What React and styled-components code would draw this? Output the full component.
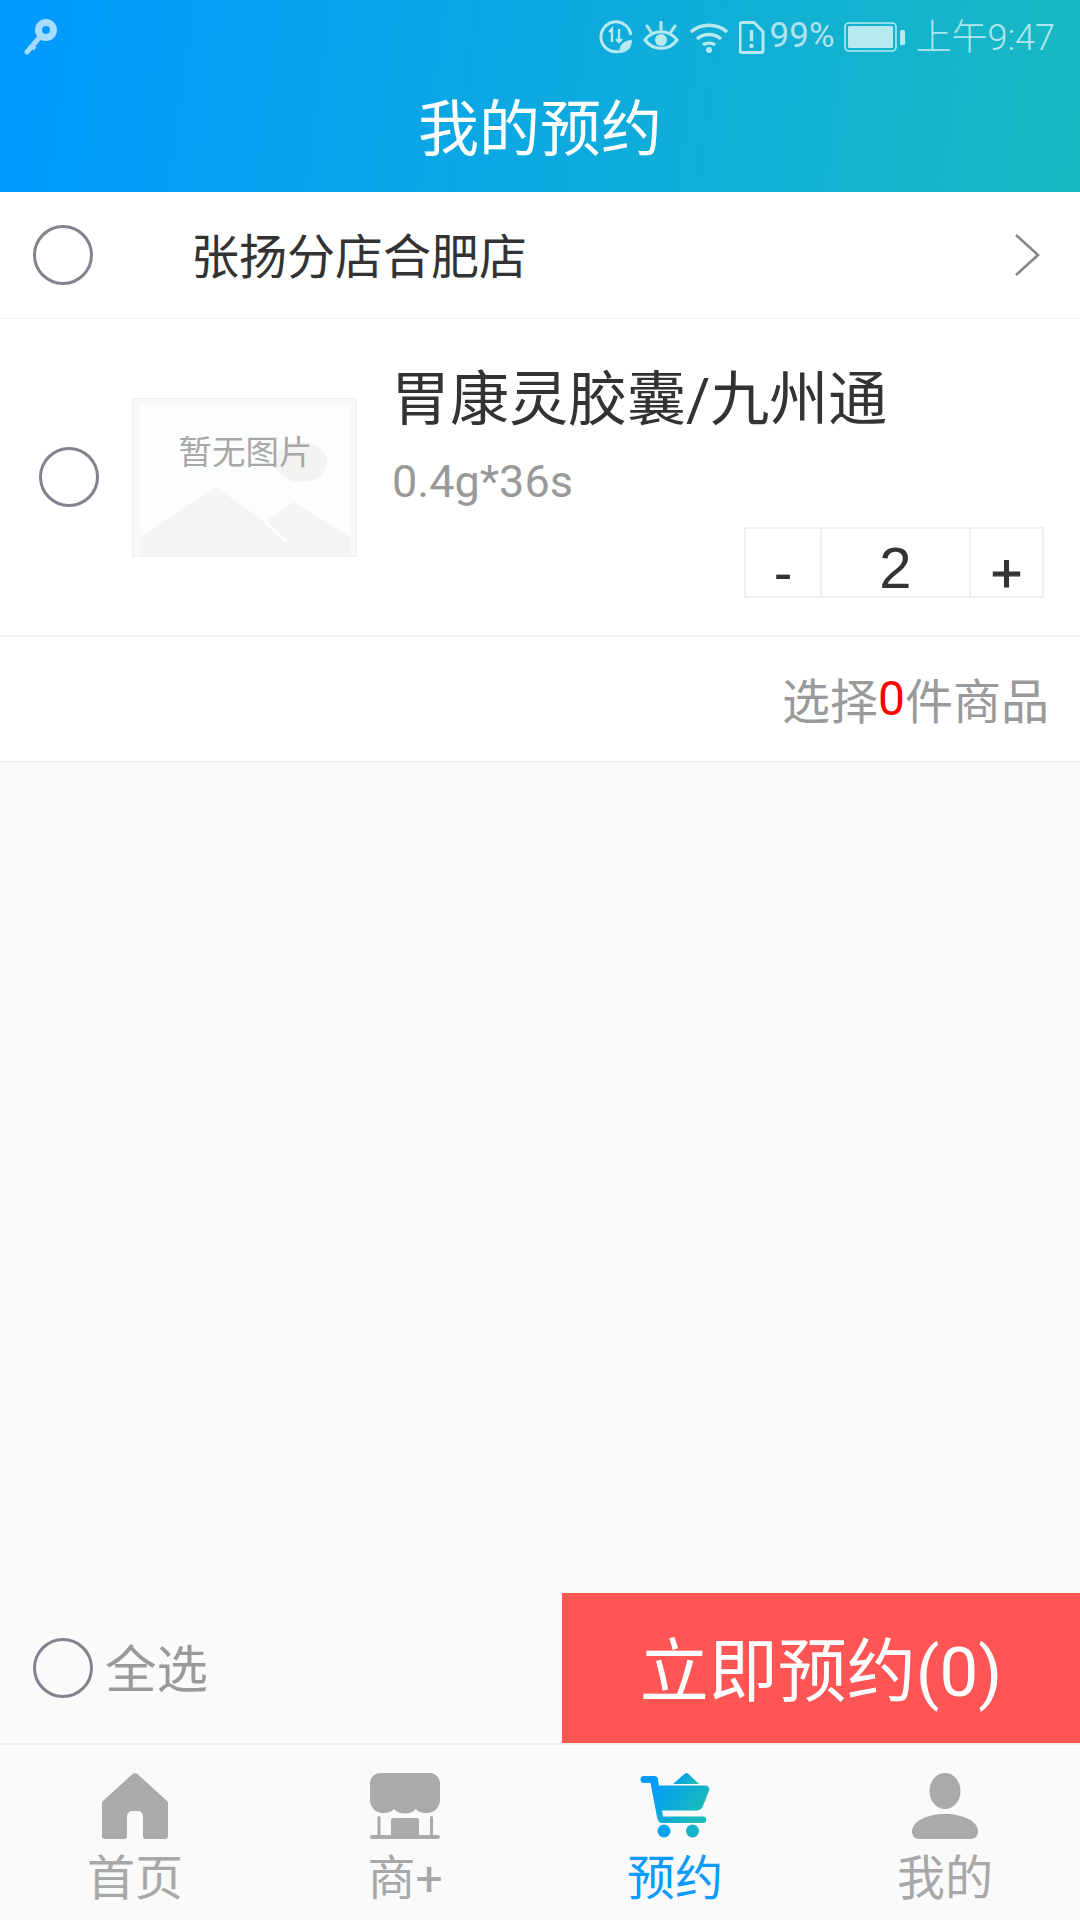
import React from "react";
import styled, { createGlobalStyle } from "styled-components";

const Global = createGlobalStyle`
  html, body { margin: 0; padding: 0; background: #fafafa; }
  * { box-sizing: border-box; }
  body { font-family: Roboto, "Noto Sans CJK SC", sans-serif; }
`;
const Page = styled.div`
  width: 1080px; height: 1920px; display: flex; flex-direction: column;
  background: #fafafa; overflow: hidden;
`;
const Header = styled.header`
  height: 192px; flex: none; display: flex; flex-direction: column;
  background: linear-gradient(98deg, #0099ff 0%, #19b9c2 100%);
`;
const StatusBar = styled.div`
  height: 70px; display: flex; align-items: center; padding: 4px 25px 0 24px;
  color: rgba(255,255,255,.68);
`;
const StatusLeft = styled.div`flex: 1; display: flex; align-items: center;`;
const StatusIcons = styled.div`display: flex; align-items: center; gap: 10px;`;
const Percent = styled.span`font-size: 35px; font-weight: 400; line-height: 36px; margin: -3px -1px 0 -5px;`;
const Clock = styled.span`font-size: 36px; font-weight: 300; line-height: 40px; margin: 1px 0 0 0;`;
const Title = styled.h1`
  margin: 0; flex: 1; display: flex; align-items: center; justify-content: center;
  color: #fff; font-size: 61px; font-weight: 400; line-height: 1; padding-bottom: 2px;
`;
const Radio = styled.span`
  flex: none; display: block; width: 60px; height: 60px; border-radius: 50%;
  border: 3px solid #84828f; background: transparent;
`;
const StoreRow = styled.div`
  height: 127px; flex: none; display: flex; align-items: center; background: #fff;
  border-bottom: 1px solid #eee; padding: 0 40px 0 33px;
`;
const StoreName = styled.div`flex: 1; margin: 6px 0 0 98px; font-size: 48px; color: #333; line-height: 1;`;
const ProductRow = styled.div`
  height: 318px; flex: none; display: flex; align-items: center; background: #fff;
  border-bottom: 2px solid #f0f0f0; padding-left: 39px;
`;
const Thumb = styled.div`
  position: relative; flex: none; width: 225px; height: 159px; margin-left: 33px;
  border: 1px solid #efefef; background: #f8f9f9;
`;
const ThumbText = styled.span`
  position: absolute; left: 2px; right: 0; top: 34px; text-align: center;
  font-size: 33.500px; line-height: 40px; color: #a8a8a8;
`;
const ProductInfo = styled.div`
  flex: 1; align-self: flex-start; display: flex; flex-direction: column; margin-left: 34px; padding: 46px 36px 0 0;
`;
const ProductName = styled.div`font-size: 59px; line-height: 70px; color: #333;`;
const ProductSpec = styled.div`font-size: 45px; line-height: 50px; margin: 22px 0 0 1px; color: #999;`;
const Stepper = styled.div`
  align-self: flex-end; display: grid; grid-template-columns: 74px 149px 73px; height: 71px; margin-top: 20px;
  border: 2px solid #f0f0f0;
`;
const StepCell = styled.div`
  display: flex; justify-content: center; align-items: center;
  color: #333; font-size: ${p => p.$size}px; line-height: 40px; font-family: "Liberation Sans", sans-serif;
  padding-top: ${p => p.$pt}px;
  & + & { border-left: 2px solid #f0f0f0; }
`;
const PlusGlyph = styled.span`-webkit-text-stroke: 1.2px #333;`;
const SummaryRow = styled.div`
  height: 126px; flex: none; display: flex; align-items: center; justify-content: flex-end;
  background: #fff; border-bottom: 2px solid #f0f0f0; padding: 0 31px 2px 0;
  font-size: 48px; color: #9a9a9a;
`;
const Count = styled.span`color: #ff0000;`;
const Spacer = styled.div`flex: 1;`;
const ActionBar = styled.div`height: 150px; flex: none; display: flex; align-items: center;`;
const SelectAll = styled.div`flex: 1; display: flex; align-items: center; padding-left: 33px; gap: 12px;`;
const SelectLabel = styled.span`font-size: 51.500px; line-height: 1; color: #9a9a9a; margin-top: 6px;`;
const ReserveButton = styled.button`
  width: 518px; height: 150px; border: 0; padding: 0 0 4px; background: #ff5555; color: #fff;
  font: 400 69px Roboto, "Noto Sans CJK SC", sans-serif;
`;
const TabBar = styled.nav`
  height: 177px; flex: none; display: grid; grid-template-columns: repeat(4, 270px);
  border-top: 2px solid #f0f0f0; background: #fafafa;
`;
const Tab = styled.div`
  display: flex; flex-direction: column; align-items: center; padding-top: 28px;
  color: ${p => (p.$active ? "#0a9bfd" : "#a8a8a8")};
`;
const TabLabel = styled.span`font-size: 48px; line-height: 50px; margin-top: 15px;`;

const Key = () => (
  <svg width="34" height="36" viewBox="0 0 34 36" fill="none">
    <circle cx="22" cy="11" r="7.5" stroke="#a8dcff" strokeWidth="7" />
    <path d="M15 19 L3 33" stroke="#a8dcff" strokeWidth="5" strokeLinecap="round" />
    <path d="M8 27l3 3" stroke="#a8dcff" strokeWidth="4" />
  </svg>
);
const DataIcon = () => (
  <svg width="34" height="34" viewBox="0 0 34 34" fill="none" stroke="#b6e9f0">
    <path d="M20 31.5A15 15 0 1 1 31.8 15" strokeWidth="3" />
    <path d="M10 12l3-3v13M20 9v13m-3-3l3 3 3-3" strokeWidth="2.4" />
    <path d="M20 33c0-8 5-13 13-13 0 8-5 13-13 13z" fill="#b6e9f0" stroke="none" />
  </svg>
);
const EyeIcon = () => (
  <svg width="36" height="32" viewBox="0 0 36 32" fill="none" stroke="#b6e9f0" strokeWidth="3">
    <path d="M2 19c8-11 24-11 32 0-8 11-24 11-32 0z" />
    <circle cx="18" cy="19" r="6" fill="#b6e9f0" stroke="none" />
    <path d="M18 1v7M4 5l4 6M32 5l-4 6" strokeLinecap="round" />
  </svg>
);
const WifiIcon = () => (
  <svg width="40" height="32" viewBox="0 0 40 32" fill="none" stroke="#b6e9f0" strokeWidth="3.4">
    <path d="M2 11c10-9 26-9 36 0M8 18c7-6 17-6 24 0M14 24c3-2.500 9-2.500 12 0" />
    <circle cx="20" cy="29" r="3" fill="#b6e9f0" stroke="none" />
  </svg>
);
const SimIcon = () => (
  <svg width="26" height="33" viewBox="0 0 26 33" fill="none" stroke="#b6e9f0" strokeWidth="3">
    <path d="M3 1.500h12l9 9v19a2 2 0 0 1-2 2H3a2 2 0 0 1-2-2v-26a2 2 0 0 1 2-2z" />
    <path d="M12.500 9v11" strokeWidth="3.400" />
    <circle cx="12.500" cy="25" r="2.200" fill="#b6e9f0" stroke="none" />
  </svg>
);
const Battery = () => (
  <svg width="62" height="30" viewBox="0 0 62 30" fill="none">
    <rect x="1" y="1" width="51" height="28" rx="4" stroke="#b6e9f0" strokeWidth="1.600" />
    <rect x="4" y="4" width="45" height="22" rx="1.500" fill="#b6e9f0" />
    <rect x="56" y="8" width="5" height="15" rx="1.500" fill="#b6e9f0" />
  </svg>
);
const Chevron = () => (
  <svg width="26" height="44" viewBox="0 0 26 44" fill="none">
    <path d="M2 2l22 20L2 42" stroke="#888" strokeWidth="2.600" />
  </svg>
);
const Mountains = () => (
  <svg width="223" height="157" viewBox="0 0 223 157" style={{ display: "block" }}>
    <rect width="223" height="157" fill="#f7f8f8" />
    <rect x="7" y="6" width="210" height="132" fill="#fcfdfd" />
    <ellipse cx="168" cy="63" rx="26" ry="20" fill="#f3f3f2" />
    <path d="M7 138L83 88l49 35 29-20 56 35v19H7z" fill="#f3f5f5" />
    <path d="M132 123l22 20" stroke="#fff" strokeWidth="2.500" />
  </svg>
);
const HomeIcon = () => (
  <svg width="66" height="66" viewBox="0 0 66 66" fill="#aaa">
    <path d="M30 1.500a4 4 0 0 1 6 0l29 26.500a3 3 0 0 1 1 2V63a3 3 0 0 1-3 3H44a3 3 0 0 1-3-3V43a5 5 0 0 0-5-5h-6a5 5 0 0 0-5 5v20a3 3 0 0 1-3 3H3a3 3 0 0 1-3-3V30a3 3 0 0 1 1-2z" />
  </svg>
);
const StoreIcon = () => (
  <svg width="70" height="66" viewBox="0 0 70 66" fill="#aaa">
    <path d="M10 0h50a10 10 0 0 1 10 10v17a13 13 0 0 1-13 13c-6 0-9-1.500-11-4-3 3-6 4.500-11 4.500S27 39 24 36c-2 2.500-5 4-11 4A13 13 0 0 1 0 27V10A10 10 0 0 1 10 0z" />
    <rect y="62" width="70" height="4" rx="2" />
    <rect x="7.500" y="43" width="3" height="21" rx="1.500" />
    <rect x="60" y="43" width="3" height="21" rx="1.500" />
    <path d="M21 47a2 2 0 0 1 2-2h24a2 2 0 0 1 2 2v17H21z" />
  </svg>
);
const CartIcon = () => (
  <svg width="70" height="66" viewBox="0 0 70 66">
    <defs>
      <linearGradient id="cartGrad" x1="0" y1="0" x2="1" y2="0.5">
        <stop offset="0.15" stopColor="#0099ff" />
        <stop offset="1" stopColor="#1abab9" />
      </linearGradient>
    </defs>
    <path fill="url(#cartGrad)" d="M4 3h10a4 4 0 0 1 4 4l1 5.500h47a3.500 3.500 0 0 1 3.200 4.500L63 33a7 7 0 0 1-6 4.500H22l1 6h40a3.200 3.200 0 0 1 0 6.500H23c-4 0-5-2-6-6L10.500 10H4a3.500 3.500 0 0 1 0-7z" />
    <path fill="url(#cartGrad)" d="M33 11l12-10.500a3 3 0 0 1 3 0L59 11z" />
    <circle cx="24" cy="58" r="6.500" fill="#0aa3ec" />
    <circle cx="52.500" cy="58" r="6.500" fill="#15b3c8" />
  </svg>
);
const UserIcon = () => (
  <svg width="66" height="66" viewBox="0 0 66 66" fill="#aaa">
    <ellipse cx="33" cy="18" rx="15.500" ry="18" />
    <path d="M33 41c19 0 33 8 33 17 0 5-3 8-7 8H7c-4 0-7-3-7-8 0-9 14-17 33-17z" />
  </svg>
);

export default function App() {
  return (
    <Page>
      <Global />
      <Header>
        <StatusBar>
          <StatusLeft><Key /></StatusLeft>
          <StatusIcons>
            <DataIcon />
            <EyeIcon />
            <WifiIcon />
            <SimIcon />
            <Percent>99%</Percent>
            <Battery />
            <Clock>上午9:47</Clock>
          </StatusIcons>
        </StatusBar>
        <Title>我的预约</Title>
      </Header>
      <StoreRow>
        <Radio />
        <StoreName>张扬分店合肥店</StoreName>
        <Chevron />
      </StoreRow>
      <ProductRow>
        <Radio />
        <Thumb>
          <Mountains />
          <ThumbText>暂无图片</ThumbText>
        </Thumb>
        <ProductInfo>
          <ProductName>胃康灵胶囊/九州通</ProductName>
          <ProductSpec>0.4g*36s</ProductSpec>
          <Stepper>
            <StepCell $size={56} $pt={20}>-</StepCell>
            <StepCell $size={58} $pt={10}>2</StepCell>
            <StepCell $size={54} $pt={20}><PlusGlyph>+</PlusGlyph></StepCell>
          </Stepper>
        </ProductInfo>
      </ProductRow>
      <SummaryRow>选择<Count>0</Count>件商品</SummaryRow>
      <Spacer />
      <ActionBar>
        <SelectAll>
          <Radio />
          <SelectLabel>全选</SelectLabel>
        </SelectAll>
        <ReserveButton>立即预约(0)</ReserveButton>
      </ActionBar>
      <TabBar>
        <Tab><HomeIcon /><TabLabel>首页</TabLabel></Tab>
        <Tab><StoreIcon /><TabLabel>商+</TabLabel></Tab>
        <Tab $active><CartIcon /><TabLabel>预约</TabLabel></Tab>
        <Tab><UserIcon /><TabLabel>我的</TabLabel></Tab>
      </TabBar>
    </Page>
  );
}
